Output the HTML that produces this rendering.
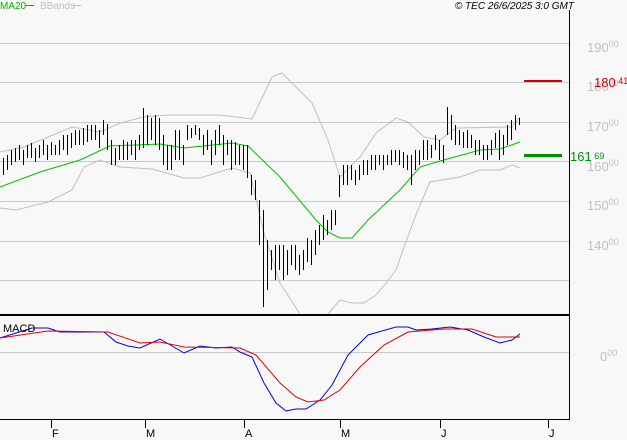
<!DOCTYPE html>
<html><head><meta charset="utf-8"><style>
html,body{margin:0;padding:0;background:#f8f8f8;}
svg{display:block;font-family:"Liberation Sans",sans-serif;}
</style></head><body>
<svg width="627" height="440" viewBox="0 0 627 440" xmlns="http://www.w3.org/2000/svg">
<rect width="627" height="440" fill="#f8f8f8"/>
<g stroke="#c8c8c8" stroke-width="1">
<line x1="0" y1="43.5" x2="569" y2="43.5"/>
<line x1="0" y1="82.5" x2="569" y2="82.5"/>
<line x1="0" y1="122.5" x2="569" y2="122.5"/>
<line x1="0" y1="161.5" x2="569" y2="161.5"/>
<line x1="0" y1="201.5" x2="569" y2="201.5"/>
<line x1="0" y1="241.5" x2="569" y2="241.5"/>
<line x1="0" y1="280.5" x2="569" y2="280.5"/>
<line x1="0" y1="352.5" x2="569" y2="352.5"/>
</g>
<g fill="#c0c0c0" font-size="13">
<text x="587" y="52">190<tspan font-size="9" dy="-5">00</tspan></text>
<text x="587" y="91">180<tspan font-size="9" dy="-5">00</tspan></text>
<text x="587" y="131">170<tspan font-size="9" dy="-5">00</tspan></text>
<text x="587" y="171">160<tspan font-size="9" dy="-5">00</tspan></text>
<text x="587" y="210">150<tspan font-size="9" dy="-5">00</tspan></text>
<text x="587" y="250">140<tspan font-size="9" dy="-5">00</tspan></text>
<text x="600" y="361">0<tspan font-size="9" dy="-5">00</tspan></text>
</g>
<!-- Bollinger -->
<g fill="none" stroke="#c0c0c0" stroke-width="1">
<polyline points="0,152 24,147 72,127 100,132 120,123 144,117 168,115 220,115 252,119 272,77 282,73 296,87 312,103 328,140 340,177 360,157 376,133 396,118 408,122 424,137 440,140 456,128 512,127 520,117"/>
<polyline points="0,208 16,210 48,202 72,190 84,167 100,160 120,167 152,169 184,178 200,178 232,168 250,173 264,233 280,283 300,314"/>
<polyline points="328,314 340,300 352,303 364,303 376,295 386,283 396,270 404,247 414,220 420,205 430,182 460,177 480,170 500,170 512,165 520,168"/>
</g>
<!-- MA20 -->
<polyline fill="none" stroke="#00c000" stroke-width="1" points="0,187 40,172 80,160 110,146 160,144 184,148 232,143 248,146 280,177 316,220 328,232 340,238 352,238 368,220 400,190 420,167 440,161 480,150 500,149 520,142"/>
<!-- bars -->
<path stroke="#000" stroke-width="1" fill="none" d="M3.5 158V175M7.5 155V170M11.5 150V165M15.5 148V162M19.5 145V160M23.5 150V165M27.5 145V158M31.5 143V158M35.5 148V162M39.5 145V158M43.5 140V155M47.5 145V160M51.5 142V155M55.5 145V155M59.5 140V155M63.5 135V150M67.5 135V155M71.5 133V148M75.5 130V145M79.5 130V145M83.5 128V145M87.5 125V142M91.5 125V140M95.5 125V140M99.5 130V148M103.5 120V135M107.5 124V150M111.5 140V165M115.5 148V165M119.5 145V160M123.5 140V160M127.5 142V160M131.5 140V155M135.5 140V160M139.5 135V150M143.5 108V148M147.5 115V145M151.5 118V140M155.5 115V145M159.5 118V150M163.5 135V165M167.5 145V170M171.5 145V170M175.5 130V160M179.5 130V160M183.5 145V165M187.5 125V140M191.5 128V138M195.5 125V135M199.5 128V140M203.5 135V155M207.5 130V150M211.5 140V165M215.5 130V155M219.5 125V145M223.5 135V165M227.5 140V155M231.5 140V170M235.5 142V165M239.5 145V165M243.5 145V170M247.5 145V178M251.5 175V195M255.5 180V200M259.5 200V245M263.5 210V307M267.5 240V290M271.5 250V270M275.5 245V280M279.5 245V270M283.5 245V280M287.5 250V275M291.5 245V265M295.5 245V270M299.5 255V275M303.5 250V270M307.5 238V262M311.5 240V265M315.5 230V255M319.5 225V245M323.5 215V240M327.5 220V235M331.5 210V230M335.5 210V225M339.5 175V197M343.5 165V185M347.5 165V185M351.5 165V180M355.5 170V185M359.5 165V180M363.5 160V175M367.5 160V175M371.5 155V170M375.5 155V170M379.5 155V165M383.5 155V170M387.5 155V165M391.5 150V165M395.5 150V162M399.5 150V165M403.5 152V168M407.5 155V170M411.5 155V185M415.5 150V170M419.5 150V165M423.5 140V160M427.5 140V160M431.5 145V158M435.5 135V150M439.5 140V160M443.5 145V163M447.5 107V135M451.5 115V140M455.5 125V145M459.5 130V145M463.5 132V148M467.5 130V148M471.5 135V148M475.5 140V155M479.5 140V155M483.5 145V160M487.5 145V160M491.5 140V155M495.5 133V148M499.5 130V160M503.5 135V155M507.5 125V145M511.5 120V140M515.5 115V130M519.5 118V125"/>
<rect x="524" y="80" width="38" height="2" fill="#d00000"/>
<rect x="524" y="154" width="38" height="3" fill="#009000"/>
<text x="594" y="87" fill="#d00000" font-size="13">180<tspan font-size="9" dy="-3"> 41</tspan></text>
<text x="570" y="161" fill="#009000" font-size="13">161<tspan font-size="9" dy="-2"> 69</tspan></text>
<!-- MACD -->
<polyline fill="none" stroke="#0000e0" stroke-width="1" points="0,338 32,328 48,328 60,332 104,332 116,342 128,346 140,348 160,339 172,346 184,353 200,346 216,348 232,347 240,352 252,357 264,383 276,403 286,411 296,409 306,409 320,400 332,385 348,355 368,335 396,327 408,327 416,330 432,329 450,327 468,330 484,337 500,343 512,340 520,334"/>
<polyline fill="none" stroke="#e00000" stroke-width="1" points="0,338 48,331 108,332 140,343 160,342 184,347 240,348 256,355 280,383 296,397 308,402 324,400 340,390 360,367 384,345 408,332 444,329 472,329 496,337 520,337"/>
<text x="3" y="332" font-size="11" fill="#000">MACD</text>
<!-- frame -->
<rect x="0" y="314" width="570" height="2" fill="#000"/>
<rect x="569" y="10" width="1" height="410" fill="#000"/>
<rect x="0" y="419" width="570" height="1" fill="#000"/>
<g stroke="#000" stroke-width="1">
<line x1="51.5" y1="419" x2="51.5" y2="428"/>
<line x1="145.5" y1="419" x2="145.5" y2="428"/>
<line x1="244.5" y1="419" x2="244.5" y2="428"/>
<line x1="340.5" y1="419" x2="340.5" y2="428"/>
<line x1="440.5" y1="419" x2="440.5" y2="428"/>
<line x1="548.5" y1="419" x2="548.5" y2="428"/>
</g>
<g font-size="11" fill="#000">
<text x="52" y="437">F</text>
<text x="146" y="437">M</text>
<text x="245" y="437">A</text>
<text x="341" y="437">M</text>
<text x="441" y="437">J</text>
<text x="549" y="437">J</text>
</g>
<text x="0" y="9" font-size="10" fill="#00b000">MA20</text>
<line x1="25" y1="5.5" x2="34" y2="5.5" stroke="#00b000"/>
<text x="40" y="9" font-size="10" fill="#c0c0c0">BBands</text>
<line x1="73" y1="5.5" x2="81" y2="5.5" stroke="#c0c0c0"/>
<text x="574" y="9" font-size="10" font-style="italic" fill="#000" text-anchor="end">© TEC 26/6/2025 3:0 GMT</text>
</svg>
</body></html>
